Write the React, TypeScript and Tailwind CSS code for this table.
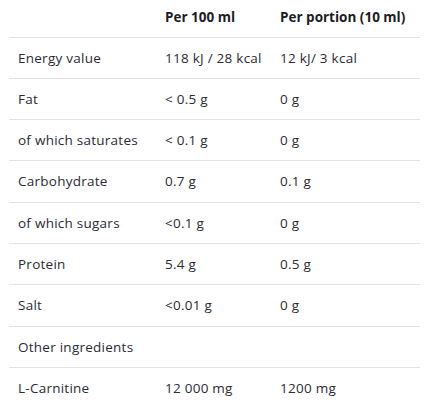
import React from 'react';

const rows: [string, string, string][] = [
  ['Energy value', '118 kJ / 28 kcal', '12 kJ/ 3 kcal'],
  ['Fat', '< 0.5 g', '0 g'],
  ['of which saturates', '< 0.1 g', '0 g'],
  ['Carbohydrate', '0.7 g', '0.1 g'],
  ['of which sugars', '<0.1 g', '0 g'],
  ['Protein', '5.4 g', '0.5 g'],
  ['Salt', '<0.01 g', '0 g'],
  ['Other ingredients', '', ''],
  ['L-Carnitine', '12 000 mg', '1200 mg'],
];

const App: React.FC = () => {
  return (
    <div className="w-[432px] h-[404px] overflow-hidden bg-white px-[9px] font-['Open_Sans',sans-serif] text-[13.5px] tracking-[0.25px] text-[#2b2b33]">
      <table className="w-[411px] border-collapse table-fixed">
        <colgroup>
          <col className="w-[156px]" />
          <col className="w-[115px]" />
          <col />
        </colgroup>
        <thead>
          <tr className="h-[37px] border-b border-[#e3e3e3]">
            <th></th>
            <th className="text-left font-bold text-[#1c1c24] pb-[3px] tracking-normal">Per 100 ml</th>
            <th className="text-left font-bold text-[#1c1c24] pb-[3px] tracking-normal">Per portion (10 ml)</th>
          </tr>
        </thead>
        <tbody>
          {rows.map(([label, a, b], i) => (
            <tr key={label} className={`h-[41.3px] ${i < rows.length - 1 ? 'border-b border-[#e3e3e3]' : ''}`}>
              <td className="pl-[9px] whitespace-nowrap">{label}</td>
              <td className="whitespace-nowrap">{a}</td>
              <td className="whitespace-nowrap">{b}</td>
            </tr>
          ))}
        </tbody>
      </table>
    </div>
  );
};

export default App;
